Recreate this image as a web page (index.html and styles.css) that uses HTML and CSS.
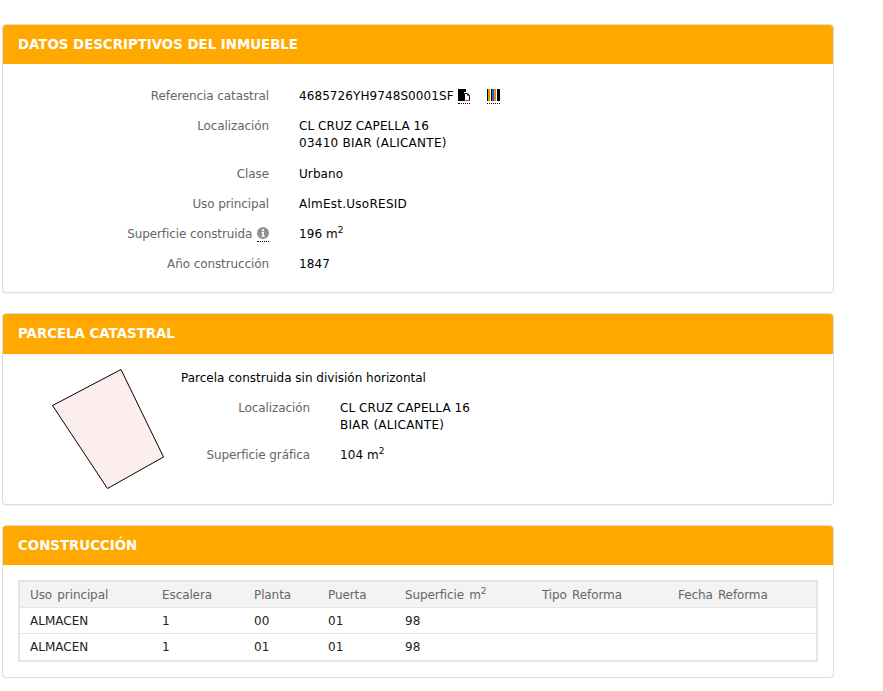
FILE: index.html
```html
<!DOCTYPE html>
<html lang="es">
<head>
<meta charset="utf-8">
<title>Datos descriptivos del inmueble</title>
<link rel="stylesheet" href="styles.css">
</head>
<body>
<main class="page">
  <section class="card">
    <h2 class="card-title">DATOS DESCRIPTIVOS DEL INMUEBLE</h2>
    <div class="card-body details">
      <div class="row">
        <div class="label">Referencia catastral</div>
        <div class="value ref">
          <span>4685726YH9748S0001SF</span>
          <span class="icon-link icon-copy">
            <svg width="12" height="12" viewBox="0 0 12 12"><path d="M0 0h8v3H6v9H0z" fill="#000"/><path d="M6.5 4.5h3l2 2v5h-5z" fill="#fff" stroke="#000"/><path d="M9.5 4.5v2h2" fill="none" stroke="#1f4fa8"/><path d="M6.5 11.5h5" stroke="#c0392b"/></svg>
          </span>
          <span class="icon-link icon-bar">
            <svg width="13" height="12" viewBox="0 0 13 12"><g><rect x="0" width="1" height="12" fill="#000"/><rect x="1" width="2" height="12" fill="#f0900f"/><rect x="4" width="1" height="12" fill="#000"/><rect x="5" width="2" height="12" fill="#2c6fb5"/><rect x="7" width="2" height="12" fill="#d9822b"/><rect x="10" width="2" height="12" fill="#000"/><rect x="12" width="1" height="12" fill="#000"/></g></svg>
          </span>
        </div>
      </div>
      <div class="row row-double">
        <div class="label">Localización</div>
        <div class="value">CL CRUZ CAPELLA 16<br><span class="caps">03410 BIAR (ALICANTE)</span></div>
      </div>
      <div class="row">
        <div class="label">Clase</div>
        <div class="value">Urbano</div>
      </div>
      <div class="row">
        <div class="label">Uso principal</div>
        <div class="value"><span class="caps">AlmEst.UsoRESID</span></div>
      </div>
      <div class="row">
        <div class="label">Superficie construida
          <span class="icon-link icon-info">
            <svg width="12" height="12" viewBox="0 0 12 12"><circle cx="6" cy="6" r="6" fill="#8f8f8f"/><rect x="5" y="2.2" width="2" height="2" fill="#fff"/><path d="M4.4 5h2.6v3.8h.9v1H4.4v-1h.9V6h-.9z" fill="#fff"/></svg>
          </span>
        </div>
        <div class="value">196 m<sup>2</sup></div>
      </div>
      <div class="row">
        <div class="label">Año construcción</div>
        <div class="value">1847</div>
      </div>
    </div>
  </section>

  <section class="card">
    <h2 class="card-title card-title-tall">PARCELA CATASTRAL</h2>
    <div class="card-body parcel">
      <svg class="parcel-map" width="114" height="122" viewBox="0 0 114 122">
        <polygon points="1.5,37.5 70,1.5 112.5,89 56.5,120.5" fill="#fbeeec" stroke="#000" stroke-width="1"/>
      </svg>
      <div class="parcel-info">
        <p class="parcel-note">Parcela construida sin división horizontal</p>
        <div class="row row-parcel">
          <div class="label">Localización</div>
          <div class="value">CL CRUZ CAPELLA 16<br><span class="caps">BIAR (ALICANTE)</span></div>
        </div>
        <div class="row row-parcel">
          <div class="label">Superficie gráfica</div>
          <div class="value">104 m<sup>2</sup></div>
        </div>
      </div>
    </div>
  </section>

  <section class="card">
    <h2 class="card-title">CONSTRUCCIÓN</h2>
    <div class="card-body table-wrap">
      <table class="units">
        <colgroup>
          <col class="c1"><col class="c2"><col class="c3"><col class="c4"><col class="c5"><col class="c6"><col class="c7">
        </colgroup>
        <thead>
          <tr><th>Uso principal</th><th>Escalera</th><th>Planta</th><th>Puerta</th><th>Superficie m<sup>2</sup></th><th>Tipo Reforma</th><th>Fecha Reforma</th></tr>
        </thead>
        <tbody>
          <tr><td>ALMACEN</td><td>1</td><td>00</td><td>01</td><td>98</td><td></td><td></td></tr>
          <tr><td>ALMACEN</td><td>1</td><td>01</td><td>01</td><td>98</td><td></td><td></td></tr>
        </tbody>
      </table>
    </div>
  </section>
</main>
</body>
</html>
```
FILE: styles.css
```css
* { box-sizing: border-box; }
html, body { margin: 0; padding: 0; background: #fff; }
body {
  font-family: "DejaVu Sans", Verdana, sans-serif;
  font-size: 12px;
  line-height: 17px;
  color: #000;
}
.page {
  width: 832px;
  margin-left: 2px;
  padding-top: 24px;
  display: flex;
  flex-direction: column;
  gap: 20px;
}
.card {
  border: 1px solid #ddd;
  border-radius: 4px;
  box-shadow: 0 1px 1px rgba(0,0,0,.05);
  overflow: hidden;
  background: #fff;
}
.card-title {
  margin: 0;
  height: 39px;
  padding: 0 15px;
  background: #ffa900;
  color: #fff;
  font-family: "DejaVu Sans", Verdana, sans-serif;
  font-size: 13.35px;
  font-weight: bold;
  line-height: 40px;
}
.card-title-tall { height: 40px; }
.details { padding: 24px 0 6px; }
.row { display: flex; margin-bottom: 13px; }
.row-double { margin-bottom: 14px; }
.label {
  width: 266px;
  text-align: right;
  color: #666;
  letter-spacing: -.1px;
}
.value { margin-left: 30px; color: #000; letter-spacing: .08px; }
.caps { letter-spacing: .25px; }
.ref { display: flex; align-items: center; }
.icon-link {
  display: inline-flex;
  border-bottom: 1px dotted #000;
  padding-bottom: 2px;
  line-height: 0;
}
.icon-copy { margin-left: 4px; }
.icon-bar { margin-left: 17px; }
.icon-info { margin-left: 1px; vertical-align: -1px; }
sup { font-size: 9px; line-height: 0; vertical-align: 5px; }
.parcel {
  height: 150px;
  display: flex;
  align-items: flex-start;
}
.parcel-map { margin: 14px 0 0 48px; flex: none; }
.parcel-info { margin-left: 16px; padding-top: 16px; }
.parcel-note { margin: 0 0 13px; }
.row-parcel .label { width: 129px; }
.table-wrap { padding: 15px; }
.units {
  width: 800px;
  table-layout: fixed;
  border-collapse: separate;
  border-spacing: 0;
  border: 2px solid #e5e5e5;
}
.units th, .units td {
  height: 26px;
  padding: 2px 0 0 10px;
  text-align: left;
  font-weight: normal;
  border-left: 1px solid #fff;
  border-bottom: 1px solid #e5e5e5;
}
.units th:first-child, .units td:first-child { border-left: 0; }
.units th { background: #f3f3f3; color: #666; border-left-color: #f3f3f3; letter-spacing: -.1px; word-spacing: 1.5px; }
.units td { color: #222; }
.units tbody tr:last-child td { border-bottom: 0; padding-top: 0; }
.c1 { width: 131px; }
.c2 { width: 92px; }
.c3 { width: 74px; }
.c4 { width: 77px; }
.c5 { width: 137px; }
.c6 { width: 136px; }
.c7 { width: 149px; }
```
